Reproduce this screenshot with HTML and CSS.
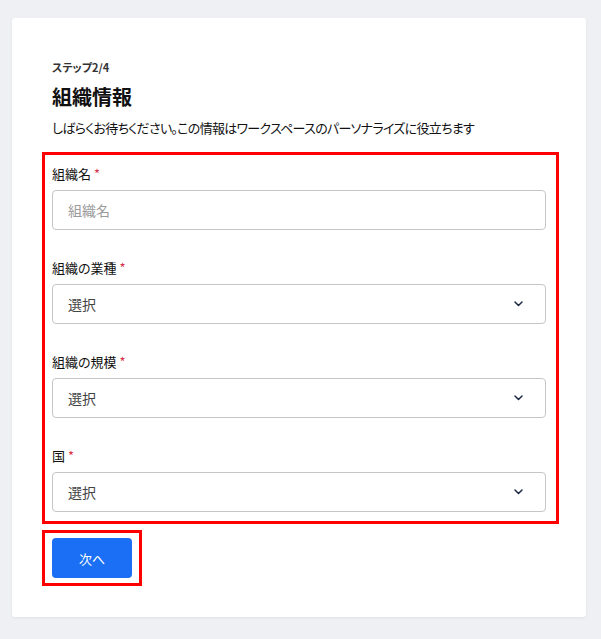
FILE: index.html
```html
<!DOCTYPE html>
<html lang="ja">
<head>
<meta charset="utf-8">
<title>組織情報</title>
<link rel="stylesheet" href="styles.css">
</head>
<body>
<div class="card">
  <div class="step">ステップ2/4</div>
  <h1 class="title">組織情報</h1>
  <p class="desc">しばらくお待ちください。この情報はワークスペースのパーソナライズに役立ちます</p>
  <div class="highlight fields">
    <div class="field">
      <label class="label">組織名 <span class="req">*</span></label>
      <div class="input"><span class="placeholder">組織名</span></div>
    </div>
    <div class="field">
      <label class="label">組織の業種 <span class="req">*</span></label>
      <div class="input select"><span class="value">選択</span>
        <svg class="chev" width="9" height="6" viewBox="0 0 9 6"><path d="M1 1l3.5 3.5L8 1" fill="none" stroke="#1d2a44" stroke-width="1.5" stroke-linecap="round" stroke-linejoin="round"/></svg>
      </div>
    </div>
    <div class="field">
      <label class="label">組織の規模 <span class="req">*</span></label>
      <div class="input select"><span class="value">選択</span>
        <svg class="chev" width="9" height="6" viewBox="0 0 9 6"><path d="M1 1l3.5 3.5L8 1" fill="none" stroke="#1d2a44" stroke-width="1.5" stroke-linecap="round" stroke-linejoin="round"/></svg>
      </div>
    </div>
    <div class="field">
      <label class="label">国 <span class="req">*</span></label>
      <div class="input select"><span class="value">選択</span>
        <svg class="chev" width="9" height="6" viewBox="0 0 9 6"><path d="M1 1l3.5 3.5L8 1" fill="none" stroke="#1d2a44" stroke-width="1.5" stroke-linecap="round" stroke-linejoin="round"/></svg>
      </div>
    </div>
  </div>
  <div class="highlight btnbox">
    <button class="btn">次へ</button>
  </div>
</div>
</body>
</html>
```
FILE: styles.css
```css
* { box-sizing: border-box; }
html, body { margin: 0; padding: 0; }
body {
  background: #eff0f3;
  font-family: "Noto Sans CJK JP", "Noto Sans", sans-serif;
  font-feature-settings: "palt";
  color: #1a1a1a;
  width: 601px;
  height: 639px;
  overflow: hidden;
}
.card {
  margin: 18px 0 0 12px;
  width: 574px;
  height: 599px;
  background: #fff;
  border-radius: 3px;
  box-shadow: 0 1px 3px rgba(0,0,0,0.06);
  padding: 40px 40px 0 40px;
}
.step {
  font-size: 11px;
  font-weight: 700;
  line-height: 18px;
  color: #333;
}
.title {
  margin: 9px 0 0;
  font-size: 20px;
  font-weight: 700;
  line-height: 24px;
  color: #111;
}
.desc {
  margin: 9px 0 0;
  font-size: 13px;
  line-height: 20px;
  letter-spacing: -0.7px;
  color: #111;
}
.highlight {
  border: 3px solid #ff0000;
}
.fields {
  margin: 14px -13px 0 -10px;
  padding: 9px 10px 9px 7px;
}
.field + .field { margin-top: 28px; }
.label {
  display: block;
  font-size: 13px;
  line-height: 20px;
  color: #111;
  margin-bottom: 6px;
}
.req { color: #d6324a; }
.input {
  height: 40px;
  border: 1px solid #c4c6ca;
  border-radius: 4px;
  display: flex;
  align-items: center;
  padding: 0 22px 0 15px;
  font-size: 14px;
}
.placeholder { color: #9a9a9a; }
.value { color: #444; }
.select { justify-content: space-between; }
.chev { display: block; }
.btnbox {
  margin: 6px 0 0 -10px;
  width: 100px;
  padding: 5px 7px;
}
.btn {
  display: block;
  width: 80px;
  height: 40px;
  border: none;
  border-radius: 4px;
  background: #1a6ff5;
  color: #fff;
  font-family: inherit;
  font-size: 13px;
  cursor: pointer;
}
```
